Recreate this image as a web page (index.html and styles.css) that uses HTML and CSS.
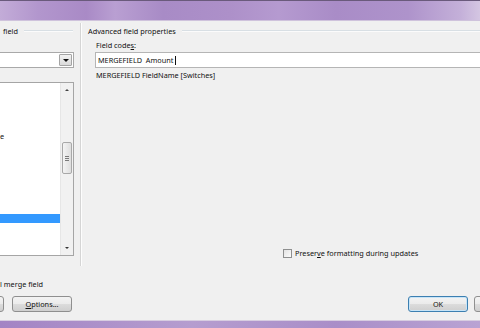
FILE: index.html
```html
<!DOCTYPE html>
<html>
<head>
<meta charset="utf-8">
<link rel="stylesheet" href="styles.css">
</head>
<body>
<div class="window">
  <div class="titlebar"></div>
  <div class="content">
    <div class="panels">
      <div class="left">
        <div class="group-head"><span class="gtitle">field</span><span class="gline"></span></div>
        <div class="combo"><span class="combo-btn"><span class="tri-down"></span></span></div>
        <div class="listbox">
          <div class="list-items">
            <div class="item item-e">e</div>
            <div class="item item-sel"></div>
          </div>
          <div class="vscroll">
            <span class="tri-up"></span>
            <div class="thumb"><span class="grip"></span></div>
            <span class="tri-down small"></span>
          </div>
        </div>
      </div>
      <div class="sep"></div>
      <div class="right">
        <div class="group-head"><span class="gtitle">Advanced field properties</span><span class="gline"></span></div>
        <div class="fc-label">Field code<u>s</u>:</div>
        <div class="fc-input">MERGEFIELD&nbsp; Amount<span class="caret"></span></div>
        <div class="fc-hint">MERGEFIELD FieldName [Switches]</div>
        <div class="check-row"><span class="checkbox"></span><span>Preser<u>v</u>e formatting during updates</span></div>
      </div>
    </div>
    <div class="merge-row">l merge field</div>
    <div class="buttons">
      <div class="btn btn-partial"></div>
      <div class="btn btn-options"><u>O</u>ptions...</div>
      <div class="spacer"></div>
      <div class="btn btn-ok">OK</div>
      <div class="btn btn-cancel"></div>
    </div>
  </div>
  <div class="bottomframe"></div>
</div>
</body>
</html>
```

FILE: styles.css
```css
html, body {
  margin: 0;
  padding: 0;
  width: 480px;
  height: 328px;
  overflow: hidden;
  background: #f0f0f0;
}
.window {
  width: 480px;
  height: 328px;
  display: flex;
  flex-direction: column;
  font-family: "Noto Sans", "Open Sans", sans-serif;
  font-size: 7.3px;
  color: #111;
}
.titlebar {
  height: 19px;
  flex: none;
  border-top: 1px solid #6a5a7c;
  border-bottom: 1px solid #cfc3dc;
  background: linear-gradient(90deg, #c3acd8 0%, #b296cd 8%, #a98ac6 18%, #b99fd2 24%, #a88bc6 34%, #ad90c9 48%, #b59ad0 58%, #a98cc7 70%, #ae93cb 85%, #c4b0d9 96%, #d4c6e2 100%);
}
.content {
  flex: 1;
  display: flex;
  flex-direction: column;
  background: #f0f0f0;
}
.panels {
  display: flex;
  height: 245px;
}
.left {
  width: 80px;
  flex: none;
  display: flex;
  flex-direction: column;
}
.sep {
  width: 1px;
  flex: none;
  background: #d5d5d5;
  border-right: 1px solid #fdfdfd;
  margin-top: 2px;
}
.right {
  flex: 1;
  display: flex;
  flex-direction: column;
  padding-left: 6px;
}
.group-head {
  display: flex;
  align-items: center;
  height: 10px;
  margin-top: 5px;
}
.gtitle {
  white-space: nowrap;
  padding-right: 6px;
}
.left .gtitle { padding-left: 3px; }
.gline {
  flex: 1;
  height: 1px;
  background: #d8dfe4;
  border-bottom: 1px solid #fbfbfb;
}
.left .gline { margin-right: 7px; }
.combo {
  margin-top: 16px;
  height: 14px;
  width: 73px;
  background: #fff;
  border: 1px solid #a9a9a9;
  border-left: none;
  box-sizing: content-box;
  display: flex;
  justify-content: flex-end;
}
.combo-btn {
  width: 11px;
  margin: 1px 1px 1px 0;
  border: 1px solid #a4a4a4;
  border-radius: 1px;
  background: linear-gradient(#f2f2f2, #dadada);
  display: flex;
  align-items: center;
  justify-content: center;
}
.tri-down {
  width: 0;
  height: 0;
  border-left: 3px solid transparent;
  border-right: 3px solid transparent;
  border-top: 3px solid #111;
}
.tri-up {
  width: 0;
  height: 0;
  border-left: 2.5px solid transparent;
  border-right: 2.5px solid transparent;
  border-bottom: 2.5px solid #444;
}
.tri-down.small {
  border-left-width: 2.5px;
  border-right-width: 2.5px;
  border-top: 2.5px solid #333;
}
.listbox {
  margin-top: 14px;
  width: 73px;
  height: 172px;
  border: 1px solid #a5a5a5;
  border-left: none;
  background: #fff;
  display: flex;
}
.list-items {
  flex: 1;
}
.item {
  height: 9px;
  line-height: 9px;
}
.item-e {
  margin-top: 49px;
  margin-left: 0;
}
.item-sel {
  margin-top: 73px;
  background: #3399ff;
}
.vscroll {
  width: 12px;
  flex: none;
  background: #f1f1f1;
  border-left: 1px solid #e6e6e6;
  display: flex;
  flex-direction: column;
  align-items: center;
}
.vscroll .tri-up { margin-top: 6px; }
.thumb {
  margin-top: 51px;
  width: 10px;
  height: 32px;
  box-sizing: border-box;
  border: 1px solid #a8a8a8;
  border-radius: 2px;
  background: linear-gradient(90deg, #f4f4f4, #dedede);
  display: flex;
  align-items: center;
  justify-content: center;
}
.grip {
  width: 4px;
  height: 5px;
  background: repeating-linear-gradient(#7a7a7a 0 1px, transparent 1px 2px);
}
.vscroll .tri-down.small { margin-top: auto; margin-bottom: 6px; }
.fc-label {
  margin-top: 4px;
  padding-left: 8px;
  height: 10px;
  line-height: 10px;
}
.fc-input {
  margin-top: 2px;
  margin-left: 7px;
  height: 14px;
  line-height: 14px;
  background: #fff;
  border: 1px solid #b5b5b5;
  border-right: none;
  padding-left: 2px;
  white-space: pre;
  display: flex;
  align-items: center;
}
.caret {
  width: 1px;
  height: 9px;
  background: #111;
  margin-left: 2px;
}
.fc-hint {
  margin-top: 1px;
  padding-left: 8px;
  height: 12px;
  line-height: 12px;
}
.check-row {
  margin-top: auto;
  margin-bottom: 8px;
  margin-left: 195px;
  display: flex;
  align-items: center;
  gap: 3px;
}
.checkbox {
  width: 9px;
  height: 9px;
  box-sizing: border-box;
  border: 1px solid #8e8f8f;
  background: linear-gradient(135deg, #e3e3e3, #fbfbfb);
}
.merge-row {
  margin-top: 13px;
  height: 10px;
  line-height: 10px;
  margin-left: 0;
}
.buttons {
  margin-top: 7px;
  display: flex;
  height: 16px;
}
.btn {
  box-sizing: border-box;
  height: 16px;
  border: 1px solid #8f8f8f;
  border-radius: 3px;
  background: linear-gradient(#f3f3f3 0%, #ebebeb 50%, #dcdcdc 51%, #cfcfcf 100%);
  display: flex;
  align-items: center;
  justify-content: center;
}
.btn-partial {
  width: 12px;
  margin-left: -8px;
}
.btn-options {
  width: 60px;
  margin-left: 8px;
}
.spacer { flex: 1; }
.btn-ok {
  width: 60px;
  border-color: #3c7fb1;
  box-shadow: inset 0 0 0 1px #c7e4f7;
}
.btn-cancel {
  width: 20px;
  margin-left: 6px;
  margin-right: -14px;
}
.bottomframe {
  height: 7px;
  flex: none;
  border-top: 1px solid #d7cde0;
  background: linear-gradient(90deg, #a384c4, #b59dcf 40%, #a98ec8 70%, #b9a3d3);
}
```
